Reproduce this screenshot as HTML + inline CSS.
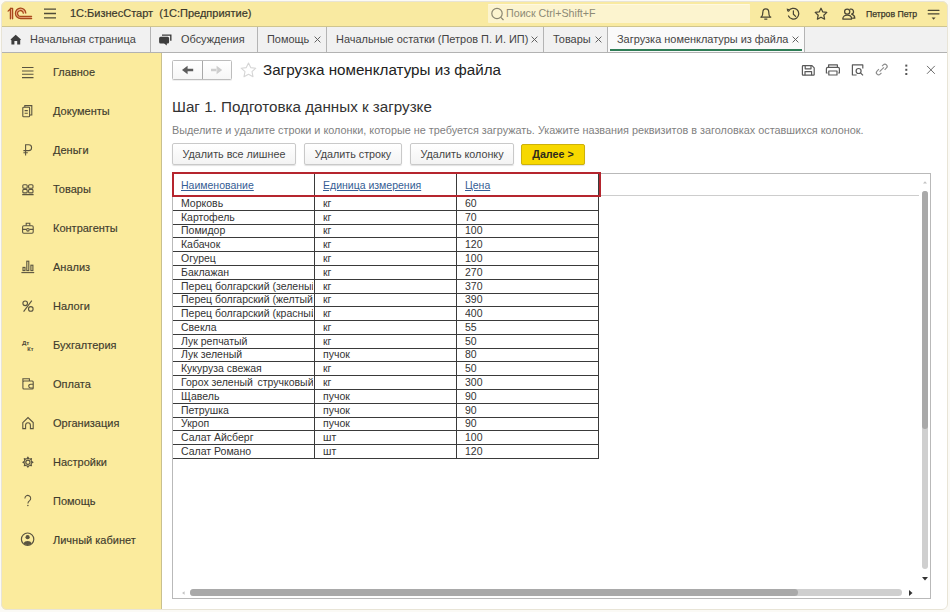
<!DOCTYPE html>
<html><head><meta charset="utf-8">
<style>
*{margin:0;padding:0;box-sizing:border-box}
html,body{width:950px;height:612px;overflow:hidden;background:#fbfaf6;font-family:"Liberation Sans",sans-serif;color:#333}
.a{position:absolute;white-space:nowrap}
#win{position:absolute;left:0;top:0;width:950px;height:612px;background:#fff;clip-path:inset(1px 2px 2px 1px round 6px)}
#frame{position:absolute;left:1px;top:1px;width:947px;height:609px;border:1px solid #e8e4d6;border-radius:6px;pointer-events:none}
#top{position:absolute;left:0;top:0;width:950px;height:27px;background:#f9eaa1;border-bottom:1px solid #cfc58f}
#tabs{position:absolute;left:0;top:27px;width:950px;height:26px;background:#f1f1f1;border-bottom:1px solid #b2b2b2}
#side{position:absolute;left:0;top:53px;width:162px;height:560px;background:#fbeb9d;border-right:1px solid #c9c08e}
.tab{position:absolute;top:0;height:25px;border-right:1px solid #b4b4b4;font-size:10.95px;color:#444;line-height:25px}
.tab .x{position:absolute;top:9px;width:7px;height:7px}
.si{position:absolute;left:53px;font-size:11px;color:#3f3c2e;-webkit-text-stroke:0.15px #3f3c2e}
.btn{position:absolute;top:143px;height:22px;border:1px solid #c9c9c9;border-radius:2px;background:linear-gradient(#fff,#f3f3f3);font-size:10.75px;color:#444;line-height:20px;text-align:center;box-shadow:0 1px 1px rgba(0,0,0,.12)}
#grid{position:absolute;left:172px;top:173px;width:759px;height:426px;border:1px solid #b9b9b9;background:#fff}
.vl{position:absolute;width:1px;background:#3a3a3a}
.hl{position:absolute;left:173px;width:426px;height:1px;background:#3a3a3a}
.tr{position:absolute;left:0;height:14px;font-size:10.5px;color:#333;line-height:14px;white-space:nowrap}
.tr span{position:absolute;top:0;overflow:hidden}
.c1{left:181px;width:132px}.c2{left:323px;width:133px}.c3{left:465px;width:133px}
.hd{position:absolute;top:177.6px;font-size:10.5px;color:#355d94;line-height:14px;text-decoration:underline}
</style></head><body>
<div id="win">
  <div id="top">
    <svg class="a" style="left:0;top:0" width="40" height="26" viewBox="0 0 40 26">
      <path d="M10.4 18.8 V8.4 H12.6 V18.8 Z" fill="#f2b48a"/>
      <path d="M20.7 8.2 A5.2 5.2 0 1 0 20.7 18.6 H31.6 V16.3 H20.7 A3 3 0 1 1 23.6 13.2 L25.9 13.2 A5.2 5.2 0 0 0 20.7 8.2Z" fill="#f2b48a"/>
      <g fill="none" stroke="#a84a1c" stroke-width="1.3" stroke-linecap="round">
        <path d="M8.1 11.1 L10.4 8.8 V18.8 M12.6 8.4 V18.8 M10.4 8.4 H12.6"/>
        <path d="M25.8 13 A5.2 5.2 0 1 0 20.7 18.5 H31.6"/>
        <path d="M23.3 13.2 A2.9 2.9 0 1 0 20.7 16.3 H31.6"/>
      </g>
    </svg>
    <svg class="a" style="left:43px;top:8px" width="14" height="11" viewBox="0 0 14 11"><g stroke="#4e4a38" stroke-width="1.3"><path d="M1 1.2H13M1 5.5H13M1 9.8H13"/></g></svg>
    <div class="a" style="left:70px;top:7px;font-size:11px;color:#3a382c;line-height:13px;-webkit-text-stroke:0.2px #3a382c">1С:БизнесСтарт&nbsp;&nbsp;(1С:Предприятие)</div>
    <div class="a" style="left:488px;top:4px;width:262px;height:19px;background:#fcf4cf;border-top:1px solid #fff8e0;border-radius:1px"></div>
    <svg class="a" style="left:490px;top:7px" width="15" height="15" viewBox="0 0 15 15"><g fill="none" stroke="#8a8670" stroke-width="1.2"><circle cx="7" cy="6.5" r="5.2"/><path d="M10.8 10.3 L13.5 13"/></g></svg>
    <div class="a" style="left:506px;top:7px;font-size:10.7px;color:#8d8a76;line-height:13px">Поиск Ctrl+Shift+F</div>
    <svg class="a" style="left:740px;top:0" width="210" height="26" viewBox="740 0 210 26">
      <g fill="none" stroke="#4a4634" stroke-width="1.25" stroke-linejoin="round" stroke-linecap="round">
        <path d="M760.8 17 H770.8"/>
        <path d="M761.6 16.8 C762.6 15.6 762.8 14.2 762.8 12.4 C762.8 10.2 764.1 8.8 765.8 8.8 C767.5 8.8 768.8 10.2 768.8 12.4 C768.8 14.2 769 15.6 770 16.8"/>
        <path d="M788.6 11.2 A5.4 5.4 0 1 1 788.5 16"/>
        <path d="M793.4 10.8 V14.2 L795.6 16.4"/>
        <path d="M821 8.2 L822.8 11.9 L826.8 12.4 L823.8 15.2 L824.6 19.2 L821 17.2 L817.4 19.2 L818.2 15.2 L815.2 12.4 L819.2 11.9 Z"/>
        <circle cx="847.2" cy="11.6" r="2.6"/>
        <path d="M842.8 19 C842.8 16.4 844.6 15.2 847.2 15.2 C849.8 15.2 851.6 16.4 851.6 19 Z"/>
        <path d="M850.2 9.2 A2.5 2.5 0 0 1 851.6 14.2 C853.6 14.8 854.8 16 854.8 18.2 H852.6"/>
        <path d="M928.2 10.3 H939 M928.2 13.8 H939"/>
      </g>
      <path d="M786.6 8.6 L789.6 9.2 L787.4 11.8 Z" fill="#4a4634"/>
      <path d="M764.3 19.2 H767.3" stroke="#4a4634" stroke-width="1.3"/>
      <path d="M931.6 17.6 H935.6 L933.6 19.8 Z" fill="#4a4634"/>
    </svg>
    <div class="a" style="left:866px;top:7.5px;font-size:8.7px;color:#3a382a;line-height:12px;-webkit-text-stroke:0.25px #3a382a">Петров Петр</div>
  </div>
  <div id="tabs">
    <div class="tab" style="left:0;width:151px">
      <svg class="a" style="left:10px;top:7px" width="12" height="12" viewBox="0 0 12 12"><path fill="#3d3d3d" d="M5.7 0.8 L11 5.6 L10.2 6.2 V10.5 H7.2 V6.9 H4.4 V10.5 H1.4 V6.2 L0.5 5.6 Z"/></svg>
      <span class="a" style="left:30px;top:0">Начальная страница</span>
    </div>
    <div class="tab" style="left:151px;width:107px">
      <svg class="a" style="left:7px;top:6px" width="16" height="14" viewBox="0 0 16 14"><path d="M4 2.1H12.8V7.8" fill="none" stroke="#3d3d3d" stroke-width="1.4"/><path fill="#3d3d3d" d="M2.6 3.8 H9.6 A1.5 1.5 0 0 1 11.1 5.3 V9 A1.5 1.5 0 0 1 9.6 10.5 H8.8 V12.6 L6.1 10.5 H2.6 A1.5 1.5 0 0 1 1.1 9 V5.3 A1.5 1.5 0 0 1 2.6 3.8 Z"/></svg>
      <span class="a" style="left:30px;top:0">Обсуждения</span>
    </div>
    <div class="tab" style="left:258px;width:69px">
      <span class="a" style="left:9px;top:0">Помощь</span><svg class="x" style="left:56px" viewBox="0 0 7 7"><path d="M.6 .6L6.4 6.4M6.4 .6L.6 6.4" stroke="#5a5a5a" stroke-width="0.95"/></svg>
    </div>
    <div class="tab" style="left:327px;width:217px">
      <span class="a" style="left:9px;top:0">Начальные остатки (Петров П. И. ИП)</span><svg class="x" style="left:204px" viewBox="0 0 7 7"><path d="M.6 .6L6.4 6.4M6.4 .6L.6 6.4" stroke="#5a5a5a" stroke-width="0.95"/></svg>
    </div>
    <div class="tab" style="left:544px;width:64px">
      <span class="a" style="left:9px;top:0">Товары</span><svg class="x" style="left:51px" viewBox="0 0 7 7"><path d="M.6 .6L6.4 6.4M6.4 .6L.6 6.4" stroke="#5a5a5a" stroke-width="0.95"/></svg>
    </div>
    <div class="tab" style="left:608px;width:197px;background:#fafafa">
      <span class="a" style="left:9px;top:0">Загрузка номенклатуры из файла</span><svg class="x" style="left:184px" viewBox="0 0 7 7"><path d="M.6 .6L6.4 6.4M6.4 .6L.6 6.4" stroke="#5a5a5a" stroke-width="0.95"/></svg>
      <div class="a" style="left:2px;top:22px;width:192px;height:2px;background:#2f7d56"></div>
    </div>
  </div>
  <div id="side">
    <svg class="a" style="left:0;top:0" width="162" height="556" viewBox="0 53 162 556">
      <g fill="none" stroke="#5a5440" stroke-width="1.1">
        <!-- Главное -->
        <path d="M22 67.5H33.5M22 71H33.5M22 74.3H33.5M22 77.6H33.5"/>
        <!-- Документы -->
        <rect x="22.8" y="107.3" width="6.8" height="9.4" rx="0.8"/>
        <path d="M24.8 107.3 V105.6 H31.8 V115 H29.6"/>
        <path d="M24.6 110.6H27.8M24.6 113.2H27.8"/>
        <!-- Деньги -->
        <path d="M25.6 155.4 V144.8 H28.7 A2.9 2.9 0 0 1 28.7 150.6 H23.4 M23.4 152.7 H27.8"/>
        <!-- Товары -->
        <rect x="22.8" y="184.8" width="4.4" height="3.5" rx="1"/>
        <rect x="28.6" y="184.8" width="4.4" height="3.5" rx="1"/>
        <rect x="22.8" y="189.4" width="4.4" height="3.5" rx="1"/>
        <rect x="28.6" y="189.4" width="4.4" height="3.5" rx="1"/>
        <path d="M22.2 194.6 H33.6"/>
        <!-- Контрагенты -->
        <path d="M26.2 225.8 V223.2 H29.8 V225.8"/>
        <rect x="22.6" y="225.8" width="10.6" height="7.4" rx="1.2"/>
        <path d="M22.6 229.4 H26.4 M29.4 229.4 H33.2"/>
        <circle cx="27.9" cy="229.8" r="1.3"/>
        <!-- Анализ -->
        <rect x="23" y="267.4" width="2" height="3.2"/>
        <rect x="26.8" y="261.2" width="2" height="9.4"/>
        <rect x="30.9" y="265.2" width="2" height="5.4"/>
        <path d="M21.4 272.6 H34.2"/>
        <!-- Налоги -->
        <circle cx="25.2" cy="303.3" r="2.3"/>
        <circle cx="30.8" cy="308.9" r="2.3"/>
        <path d="M31.8 300.6 L23.6 311.6"/>
        <!-- Оплата -->
        <path d="M22.9 381.6 V378.8 H29.4 V381"/>
        <rect x="22.9" y="381" width="10.3" height="8" rx="1"/>
        <path d="M33.2 384.2 H30.6 A1.9 1.9 0 0 0 30.6 388 H33.2"/>
        <!-- Организация -->
        <path d="M22.8 422.6 L28 417.6 L33.2 422.6 V428.6 H30.4 V425.2 A2.4 2.4 0 0 0 25.6 425.2 V428.6 H22.8 Z"/>
        <!-- Настройки -->
        <path d="M27.90 456.30 L29.47 458.41 L32.07 458.03 L31.69 460.63 L33.80 462.20 L31.69 463.77 L32.07 466.37 L29.47 465.99 L27.90 468.10 L26.33 465.99 L23.73 466.37 L24.11 463.77 L22.00 462.20 L24.11 460.63 L23.73 458.03 L26.33 458.41Z" fill="#5a5440" stroke="none"/>
        <circle cx="27.9" cy="462.2" r="3.2" fill="#fbeb9d" stroke="none"/>
        <circle cx="27.9" cy="462.2" r="2.1" stroke-width="1.2"/>
        <!-- Личный кабинет -->
        <circle cx="27.6" cy="539.2" r="6.2" stroke-width="1.2"/>
      </g>
      <g fill="#5a5440">
        <circle cx="27.6" cy="537.2" r="2.1"/>
        <path d="M23.4 543.2 A4.6 3.6 0 0 1 31.8 543.2 A5.6 5.6 0 0 1 23.4 543.2Z"/>
      </g>
      <text x="21.9" y="344.6" font-family="Liberation Sans" font-size="6.2" font-weight="bold" fill="#4e4936">Дт</text>
      <text x="27.3" y="350.5" font-family="Liberation Sans" font-size="5.6" font-weight="bold" fill="#4e4936">Кт</text>
      <path d="M24.9 498.4 A2.9 2.9 0 1 1 29.6 500.6 C28.4 501.5 27.9 502 27.9 503.4" fill="none" stroke="#5a5440" stroke-width="1.05"/><circle cx="27.9" cy="505.6" r="0.75" fill="#5a5440"/>
    </svg>
    <div class="si" style="top:12.6px">Главное</div>
    <div class="si" style="top:51.6px">Документы</div>
    <div class="si" style="top:90.6px">Деньги</div>
    <div class="si" style="top:129.6px">Товары</div>
    <div class="si" style="top:168.6px">Контрагенты</div>
    <div class="si" style="top:207.6px">Анализ</div>
    <div class="si" style="top:246.6px">Налоги</div>
    <div class="si" style="top:285.6px">Бухгалтерия</div>
    <div class="si" style="top:324.6px">Оплата</div>
    <div class="si" style="top:363.6px">Организация</div>
    <div class="si" style="top:402.6px">Настройки</div>
    <div class="si" style="top:441.6px">Помощь</div>
    <div class="si" style="top:480.6px">Личный кабинет</div>
  </div>
  <div id="content">
    <!-- nav buttons -->
    <div class="a" style="left:172px;top:60px;width:60px;height:20px;border:1px solid #bdbdbd;border-radius:1.5px;background:linear-gradient(#fff,#f6f6f6);box-shadow:0 1px 0 rgba(0,0,0,.06)"></div>
    <div class="a" style="left:202px;top:61px;width:1px;height:18px;background:#a8a8a8"></div>
    <svg class="a" style="left:170px;top:58px" width="60" height="24" viewBox="170 58 60 24">
      <path d="M182 70 L187.6 65.8 V74.2 Z M187 68.7 H193.2 V71.3 H187 Z" fill="#5c5c5c"/>
      <path d="M222.2 70 L216.6 65.8 V74.2 Z M211 68.8 H217.2 V71.2 H211 Z" fill="#cdcdcd"/>
    </svg>
    <svg class="a" style="left:240px;top:62px" width="17" height="16" viewBox="0 0 17 16"><path fill="none" stroke="#d6d6d6" stroke-width="1.1" stroke-linejoin="round" d="M8.5 1 L10.7 5.6 L15.8 6.2 L12 9.6 L13 14.7 L8.5 12.2 L4 14.7 L5 9.6 L1.2 6.2 L6.3 5.6 Z"/></svg>
    <div class="a" style="left:263px;top:60px;font-size:15.2px;color:#222;line-height:19px">Загрузка номенклатуры из файла</div>
    <!-- right icons -->
    <svg class="a" style="left:795px;top:58px" width="150" height="26" viewBox="795 58 150 26">
      <g fill="none" stroke="#5a5a5a" stroke-width="1.2" stroke-linejoin="round">
        <path d="M803.2 65.6 H812 L814.2 67.8 V74.4 A0.8 0.8 0 0 1 813.4 75.2 H803.2 A0.8 0.8 0 0 1 802.4 74.4 V66.4 A0.8 0.8 0 0 1 803.2 65.6 Z"/>
        <path d="M805.2 65.6 V68.8 H811 V65.6 M805 75.2 V71.6 H811.6 V75.2"/>
        <path d="M828.6 67.4 V64.9 H837.4 V67.4"/>
        <path d="M827.6 73 H826.4 V68.8 A1.4 1.4 0 0 1 827.8 67.4 H838 A1.4 1.4 0 0 1 839.4 68.8 V73 H838.2"/>
        <path d="M828.8 71 H837 V75 H828.8 Z"/>
        <path d="M862.8 68.4 V64.9 H852.4 V75 H856.6"/>
        <circle cx="858.6" cy="71" r="2.5"/>
        <path d="M860.5 72.9 L863 75.4"/>
      </g>
      <g fill="none" stroke="#8c8c8c" stroke-width="1.15">
        <path d="M878.88 69.21 L877.04 71.04 A2.2 2.2 0 0 0 880.16 74.16 L881.44 72.87"/>
        <path d="M884.62 69.79 L886.46 67.96 A2.2 2.2 0 0 0 883.34 64.84 L882.06 66.13"/>
        <path d="M879.59 71.61 L883.91 67.39"/>
        <path d="M927 65.9 L934.8 73.8 M934.8 65.9 L927 73.8" stroke="#6e6e6e" stroke-width="1"/>
      </g>
      <g fill="#555"><rect x="905.3" y="64.6" width="2" height="2"/><rect x="905.3" y="68.8" width="2" height="2"/><rect x="905.3" y="73" width="2" height="2"/></g>
    </svg>
    <!-- step heading -->
    <div class="a" style="left:172px;top:98px;font-size:15.2px;color:#333;line-height:18px">Шаг 1. Подготовка данных к загрузке</div>
    <div class="a" style="left:172px;top:124px;font-size:10.85px;color:#7f7f7f;line-height:13px">Выделите и удалите строки и колонки, которые не требуется загружать. Укажите названия реквизитов в заголовках оставшихся колонок.</div>
    <!-- buttons -->
    <div class="btn" style="left:172px;width:124px">Удалить все лишнее</div>
    <div class="btn" style="left:304px;width:98px">Удалить строку</div>
    <div class="btn" style="left:410px;width:104px">Удалить колонку</div>
    <div class="btn" style="left:521px;width:64px;top:144px;height:21px;line-height:19px;background:#f7d800;border-color:#cdb10a;font-weight:bold;color:#2d2b1c">Далее &gt;</div>
    <!-- grid -->
    <div id="grid"></div>
    <div class="a" style="left:173px;top:195px;width:746px;height:1px;background:#cdcdcd"></div>
    <div class="hd" style="left:181px">Наименование</div><div class="hd" style="left:323px">Единица измерения</div><div class="hd" style="left:465px">Цена</div>
    <div id="tbl">
<div class="vl" style="left:314px;top:173px;height:286px"></div>
<div class="vl" style="left:456px;top:173px;height:286px"></div>
<div class="vl" style="left:598px;top:173px;height:286px"></div>
<div class="hl" style="top:210px"></div>
<div class="hl" style="top:224px"></div>
<div class="hl" style="top:237px"></div>
<div class="hl" style="top:251px"></div>
<div class="hl" style="top:265px"></div>
<div class="hl" style="top:279px"></div>
<div class="hl" style="top:293px"></div>
<div class="hl" style="top:306px"></div>
<div class="hl" style="top:320px"></div>
<div class="hl" style="top:334px"></div>
<div class="hl" style="top:348px"></div>
<div class="hl" style="top:361px"></div>
<div class="hl" style="top:375px"></div>
<div class="hl" style="top:389px"></div>
<div class="hl" style="top:403px"></div>
<div class="hl" style="top:417px"></div>
<div class="hl" style="top:430px"></div>
<div class="hl" style="top:444px"></div>
<div class="hl" style="top:458px"></div>
<div class="tr" style="top:196px"><span class="c1">Морковь</span><span class="c2">кг</span><span class="c3">60</span></div>
<div class="tr" style="top:210px"><span class="c1">Картофель</span><span class="c2">кг</span><span class="c3">70</span></div>
<div class="tr" style="top:223px"><span class="c1">Помидор</span><span class="c2">кг</span><span class="c3">100</span></div>
<div class="tr" style="top:237px"><span class="c1">Кабачок</span><span class="c2">кг</span><span class="c3">120</span></div>
<div class="tr" style="top:251px"><span class="c1">Огурец</span><span class="c2">кг</span><span class="c3">100</span></div>
<div class="tr" style="top:265px"><span class="c1">Баклажан</span><span class="c2">кг</span><span class="c3">270</span></div>
<div class="tr" style="top:279px"><span class="c1">Перец болгарский (зеленый)</span><span class="c2">кг</span><span class="c3">370</span></div>
<div class="tr" style="top:292px"><span class="c1">Перец болгарский (желтый)</span><span class="c2">кг</span><span class="c3">390</span></div>
<div class="tr" style="top:306px"><span class="c1">Перец болгарский (красный)</span><span class="c2">кг</span><span class="c3">400</span></div>
<div class="tr" style="top:320px"><span class="c1">Свекла</span><span class="c2">кг</span><span class="c3">55</span></div>
<div class="tr" style="top:334px"><span class="c1">Лук репчатый</span><span class="c2">кг</span><span class="c3">50</span></div>
<div class="tr" style="top:347px"><span class="c1">Лук зеленый</span><span class="c2">пучок</span><span class="c3">80</span></div>
<div class="tr" style="top:361px"><span class="c1">Кукуруза свежая</span><span class="c2">кг</span><span class="c3">50</span></div>
<div class="tr" style="top:375px"><span class="c1">Горох зеленый<i style="font-style:normal;letter-spacing:1.6px"> </i>стручковый</span><span class="c2">кг</span><span class="c3">300</span></div>
<div class="tr" style="top:389px"><span class="c1">Щавель</span><span class="c2">пучок</span><span class="c3">90</span></div>
<div class="tr" style="top:403px"><span class="c1">Петрушка</span><span class="c2">пучок</span><span class="c3">90</span></div>
<div class="tr" style="top:416px"><span class="c1">Укроп</span><span class="c2">пучок</span><span class="c3">90</span></div>
<div class="tr" style="top:430px"><span class="c1">Салат Айсберг</span><span class="c2">шт</span><span class="c3">100</span></div>
<div class="tr" style="top:444px"><span class="c1">Салат Романо</span><span class="c2">шт</span><span class="c3">120</span></div>
</div>
    <div class="a" style="left:172px;top:172px;width:429px;height:25px;border:2px solid #b5252e"></div>
    <!-- scrollbars -->
    <svg class="a" style="left:921px;top:179px" width="8" height="6" viewBox="0 0 8 6"><path d="M2 4.6L4 2.2L6 4.6Z" fill="#c2c2c2"/></svg>
    <div class="a" style="left:922px;top:191px;width:6px;height:378px;border-radius:3px;background:#cfcfcf"></div>
    <div class="a" style="left:922px;top:191px;width:6px;height:238px;border-radius:3px;background:#a9a9a9"></div>
    <svg class="a" style="left:921px;top:576px" width="8" height="6" viewBox="0 0 8 6"><path d="M1 1L4 4.5L7 1Z" fill="#333"/></svg>
    <svg class="a" style="left:180px;top:589px" width="6" height="8" viewBox="0 0 6 8"><path d="M4.6 2.2L2 4L4.6 5.8Z" fill="#c4c4c4"/></svg>
    <div class="a" style="left:190px;top:589px;width:712px;height:7px;border-radius:3.5px;background:#cfcfcf"></div>
    <div class="a" style="left:190px;top:589px;width:608px;height:7px;border-radius:3.5px;background:#a9a9a9"></div>
    <svg class="a" style="left:908px;top:589px" width="6" height="8" viewBox="0 0 6 8"><path d="M1 1L4.5 4L1 7Z" fill="#333"/></svg>
  </div>
</div>
<div id="frame"></div>
</body></html>
